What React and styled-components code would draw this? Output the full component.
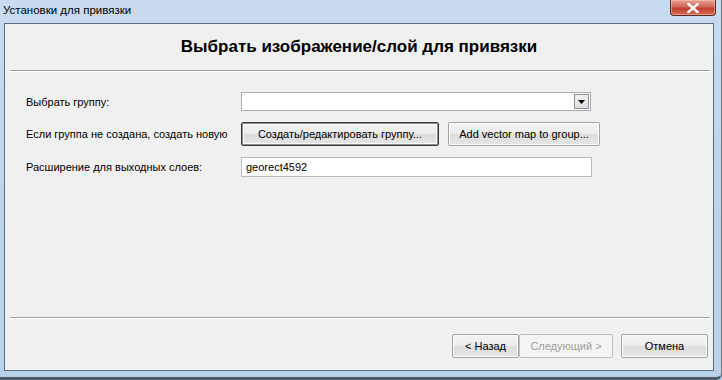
import React from 'react';
import styled, { createGlobalStyle } from 'styled-components';

const GlobalStyle = createGlobalStyle`
  html, body { margin: 0; padding: 0; }
  body {
    font-family: "Liberation Sans", Arial, sans-serif;
    font-size: 11px;
    color: #000;
    background: #b9d1ea;
  }
`;

const App = () => {
  return (
    <>
      <GlobalStyle />
      <Window>
        <TitleBar>
          <TitleText>Установки для привязки</TitleText>
          <CloseButton aria-label="Закрыть">
            <svg width="12" height="10" viewBox="0 0 12 10">
              <path d="M1.5 1 L10.5 9 M10.5 1 L1.5 9" stroke="#fff" strokeWidth="2.4" strokeLinecap="square" />
            </svg>
          </CloseButton>
        </TitleBar>

        <Panel>
          <Header>
            <Heading>Выбрать изображение/слой для привязки</Heading>
          </Header>
          <Separator />

          <Form>
            <Row>
              <Label>Выбрать группу:</Label>
              <Combo>
                <ComboValue />
                <ComboArrow>
                  <svg width="7" height="4" viewBox="0 0 7 4">
                    <path d="M0 0 H7 L3.5 4 Z" fill="#000" />
                  </svg>
                </ComboArrow>
              </Combo>
            </Row>
            <Row $h={24}>
              <Label>Если группа не создана, создать новую</Label>
              <Buttons>
                <Button $w={198} $focused>Создать/редактировать группу...</Button>
                <Button $w={152}>Add vector map to group...</Button>
              </Buttons>
            </Row>
            <Row $h={20}>
              <Label>Расширение для выходных слоев:</Label>
              <TextInput defaultValue="georect4592" />
            </Row>
          </Form>

          <Separator />
          <Footer>
            <NavGroup>
              <Button $w={67}>&lt; Назад</Button>
              <Button $w={94} disabled>Следующий &gt;</Button>
            </NavGroup>
            <Button $w={87}>Отмена</Button>
          </Footer>
        </Panel>
      </Window>
    </>
  );
};

export default App;

const Window = styled.div`
  width: 722px;
  height: 380px;
  box-sizing: border-box;
  display: flex;
  flex-direction: column;
  background: linear-gradient(180deg, #c7dbf1 0%, #bcd3ec 60%, #b9d1ea 100%);
  border-bottom: 3px solid #4f5a66;
  border-right: 1px solid #6b7a8a;
  border-radius: 0 0 6px 0;
  overflow: hidden;
`;

const TitleBar = styled.div`
  height: 23px;
  display: flex;
  align-items: flex-start;
  padding-left: 3px;
  flex-shrink: 0;
`;

const TitleText = styled.div`
  margin-top: 4px;
  font-size: 11.5px;
  color: #000;
  white-space: nowrap;
`;

const CloseButton = styled.button`
  margin-left: auto;
  margin-right: 5px;
  width: 46px;
  height: 16px;
  padding: 0;
  display: flex;
  align-items: center;
  justify-content: center;
  border: 1px solid #5c2a24;
  border-top: none;
  border-radius: 0 0 4px 4px;
  background: linear-gradient(180deg, #e8a093 0%, #d2685a 45%, #c13f2f 55%, #d66e58 100%);
  box-shadow: inset 0 0 0 1px rgba(255, 210, 200, 0.45);
`;

const Panel = styled.div`
  margin: 0 7px 0 4px;
  height: 348px;
  box-sizing: border-box;
  border: 1px solid #5c6e82;
  background: #f0f0f0;
  display: flex;
  flex-direction: column;
`;

const Header = styled.div`
  height: 46px;
  display: flex;
  align-items: center;
  justify-content: center;
`;

const Heading = styled.h1`
  margin: 0;
  font-size: 17px;
  font-weight: bold;
  color: #000;
`;

const Separator = styled.div`
  height: 1px;
  margin: 0 3px 0 5px;
  background: #a0a0a0;
  border-bottom: 1px solid #ffffff;
`;

const Form = styled.div`
  flex: 1;
  display: flex;
  flex-direction: column;
  gap: 11px;
  padding: 20px 0 0 21px;
`;

const Row = styled.div`
  height: ${({ $h }) => $h || 19}px;
  display: grid;
  grid-template-columns: 215px auto;
  align-items: center;
`;

const Label = styled.span`
  white-space: nowrap;
  color: #000;
`;

const Combo = styled.div`
  width: 350px;
  height: 19px;
  box-sizing: border-box;
  border: 1px solid #a5acb5;
  background: #fff;
  display: flex;
  align-items: stretch;
`;

const ComboValue = styled.div`
  flex: 1;
`;

const ComboArrow = styled.div`
  width: 15px;
  margin: 1px;
  box-sizing: border-box;
  border: 1px solid #8e8f8f;
  background: linear-gradient(180deg, #f2f2f2, #dedede);
  display: flex;
  align-items: center;
  justify-content: center;
`;

const Buttons = styled.div`
  display: flex;
  gap: 9px;
  height: 24px;
`;

const Button = styled.button`
  width: ${({ $w }) => $w}px;
  height: 24px;
  box-sizing: border-box;
  padding: 0 4px;
  font-family: "Liberation Sans", Arial, sans-serif;
  font-size: 11px;
  white-space: nowrap;
  color: #000;
  background: linear-gradient(180deg, #f4f4f4 0%, #ebebeb 50%, #dddddd 51%, #e5e5e5 100%);
  border: 1px solid ${({ $focused }) => ($focused ? '#3c3c3c' : '#a3a3a3')};
  box-shadow: ${({ $focused }) =>
    $focused ? 'inset 0 0 0 1px #8d8d8d, inset 0 0 0 2px #fcfcfc' : 'inset 0 0 0 1px #fcfcfc'};
  border-radius: 2px;

  &:disabled {
    color: #a0a0a0;
    background: #f4f4f4;
    border-color: #c0c0c0;
    box-shadow: none;
  }
`;

const TextInput = styled.input`
  width: 351px;
  height: 20px;
  box-sizing: border-box;
  padding: 0 4px;
  font-family: "Liberation Sans", Arial, sans-serif;
  font-size: 11px;
  color: #000;
  border: 1px solid #b5bcc4;
  background: #fff;
  outline: none;
`;

const Footer = styled.div`
  height: 51px;
  box-sizing: border-box;
  padding: 15px 5px 0 0;
  display: flex;
  justify-content: flex-end;
  gap: 8px;
`;

const NavGroup = styled.div`
  display: flex;
  gap: 0;
`;
